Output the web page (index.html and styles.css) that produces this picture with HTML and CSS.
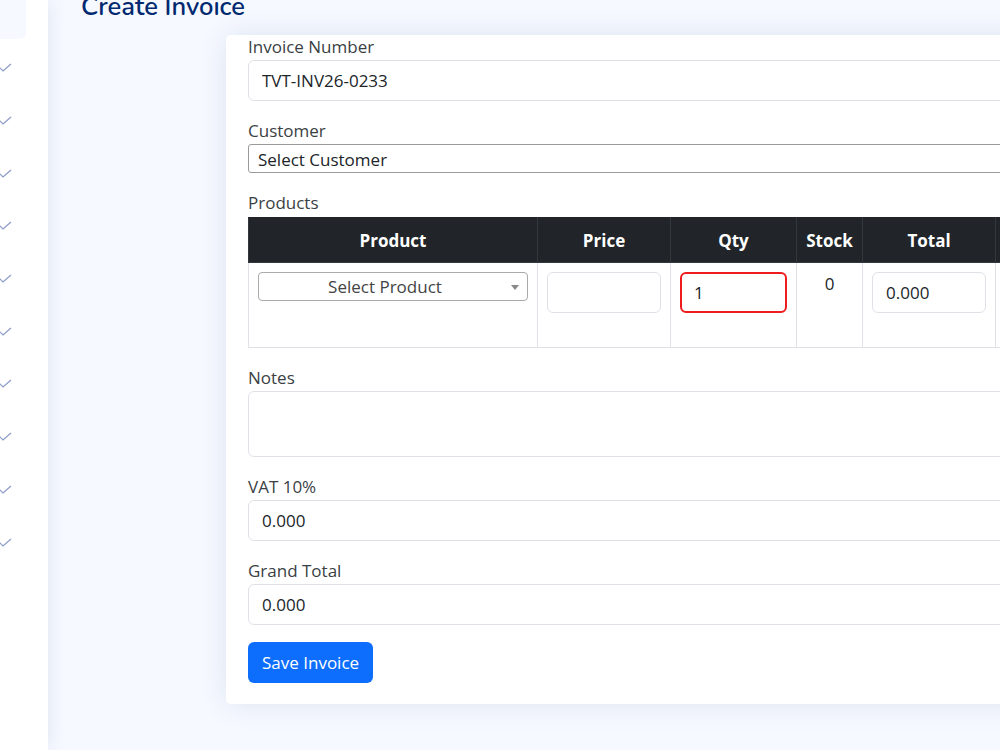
FILE: index.html
```
<!doctype html>
<html lang="en">
    <head>
        <meta charset="UTF-8" />
        <meta name="viewport" content="width=device-width, initial-scale=1.0" />
        <title>Create Invoice</title>
        <link rel="stylesheet" href="styles.css">
    </head>
    <body>
        <aside class="sidebar">
            <div class="sidebar-top"></div>
            <ul class="sidebar-nav">
                <li><svg viewBox="0 0 12 10" class="check"><polyline points="-2,3 3,8 11,1" /></svg></li>
                <li><svg viewBox="0 0 12 10" class="check"><polyline points="-2,3 3,8 11,1" /></svg></li>
                <li><svg viewBox="0 0 12 10" class="check"><polyline points="-2,3 3,8 11,1" /></svg></li>
                <li><svg viewBox="0 0 12 10" class="check"><polyline points="-2,3 3,8 11,1" /></svg></li>
                <li><svg viewBox="0 0 12 10" class="check"><polyline points="-2,3 3,8 11,1" /></svg></li>
                <li><svg viewBox="0 0 12 10" class="check"><polyline points="-2,3 3,8 11,1" /></svg></li>
                <li><svg viewBox="0 0 12 10" class="check"><polyline points="-2,3 3,8 11,1" /></svg></li>
                <li><svg viewBox="0 0 12 10" class="check"><polyline points="-2,3 3,8 11,1" /></svg></li>
                <li><svg viewBox="0 0 12 10" class="check"><polyline points="-2,3 3,8 11,1" /></svg></li>
                <li><svg viewBox="0 0 12 10" class="check"><polyline points="-2,3 3,8 11,1" /></svg></li>
            </ul>
        </aside>

        <main class="main">
            <h1 class="pagetitle">Create Invoice</h1>

            <div class="card">
                <form class="card-body">
                    <div class="field">
                        <label for="invoice_number">Invoice Number</label>
                        <input type="text" id="invoice_number" class="form-control" value="TVT-INV26-0233" />
                    </div>

                    <div class="field field-select">
                        <label for="customer">Customer</label>
                        <select id="customer" class="plain-select">
                            <option>Select Customer</option>
                        </select>
                    </div>

                    <div class="field field-table">
                        <label>Products</label>
                        <table class="products">
                            <colgroup>
                                <col class="col-product" />
                                <col class="col-price" />
                                <col class="col-qty" />
                                <col class="col-stock" />
                                <col class="col-total" />
                                <col class="col-action" />
                            </colgroup>
                            <thead>
                                <tr>
                                    <th>Product</th>
                                    <th>Price</th>
                                    <th>Qty</th>
                                    <th>Stock</th>
                                    <th>Total</th>
                                    <th></th>
                                </tr>
                            </thead>
                            <tbody>
                                <tr>
                                    <td>
                                        <div class="product-select">
                                            <span>Select Product</span>
                                            <b class="arrow"></b>
                                        </div>
                                    </td>
                                    <td><input type="text" class="form-control" /></td>
                                    <td><input type="text" class="form-control is-invalid" value="1" /></td>
                                    <td class="stock">0</td>
                                    <td><input type="text" class="form-control" value="0.000" /></td>
                                    <td></td>
                                </tr>
                            </tbody>
                        </table>
                    </div>

                    <div class="field">
                        <label for="notes">Notes</label>
                        <textarea id="notes" class="form-control notes"></textarea>
                    </div>

                    <div class="field">
                        <label for="vat">VAT 10%</label>
                        <input type="text" id="vat" class="form-control" value="0.000" />
                    </div>

                    <div class="field field-last">
                        <label for="grand_total">Grand Total</label>
                        <input type="text" id="grand_total" class="form-control" value="0.000" />
                    </div>

                    <button type="button" class="btn-primary">Save Invoice</button>
                </form>
            </div>
        </main>
    </body>
</html>
```

FILE: styles.css
```
html,
body {
    height: 100%;
    overflow: hidden;
}
body {
    font-family: "Open Sans", "Liberation Sans", sans-serif;
    background-color: #f6f9ff;
    color: #212529;
    display: flex;
    margin: 0;
}
.sidebar {
    width: 48px;
    flex-shrink: 0;
    background-color: #ffffff;
    box-shadow: 0 0 20px rgba(1, 41, 112, 0.1);
    position: relative;
    z-index: 2;
}
.sidebar-top {
    width: 26px;
    height: 39px;
    background-color: #f6f9ff;
    border-bottom-right-radius: 6px;
}
.sidebar-nav {
    list-style: none;
    margin: 0;
    padding: 3px 0 0 0;
}
.sidebar-nav li {
    height: 52.7px;
    display: flex;
    align-items: center;
}
.check {
    width: 12px;
    height: 10px;
    overflow: visible;
}
.check polyline {
    fill: none;
    stroke: #8b9bc8;
    stroke-width: 1.2;
}
.main {
    flex: 1;
    min-width: 0;
    padding-left: 33px;
    overflow: hidden;
}
.pagetitle {
    font-family: "Nunito", "Open Sans", sans-serif;
    font-size: 25.5px;
    font-weight: 600;
    line-height: 31px;
    color: #012970;
    margin: -9px 0 13px 0;
    white-space: nowrap;
}
.card {
    margin-left: 145px;
    width: 871px;
    background-color: #ffffff;
    border-radius: 5px;
    box-shadow: 0 0 30px rgba(1, 41, 112, 0.1);
}
.card-body {
    padding: 0 22px 21px 22px;
}
.field {
    margin-bottom: 18px;
}
.field-last {
    margin-bottom: 17px;
}
label {
    display: block;
    font-size: 17px;
    line-height: 24px;
    color: #3a3f44;
    margin-bottom: 1px;
}
.form-control {
    display: block;
    box-sizing: border-box;
    width: 100%;
    height: 41px;
    padding: 0 13px;
    font-family: inherit;
    font-size: 17px;
    color: #212529;
    background-color: #ffffff;
    border: 1px solid #dee2e6;
    border-radius: 6px;
    outline: none;
}
.form-control.is-invalid {
    border: 2px solid #ee1c1c;
    padding-left: 12px;
}
.notes {
    height: 66px;
    resize: none;
}
.plain-select {
    display: block;
    box-sizing: border-box;
    width: 100%;
    height: 29px;
    margin-top: 1px;
    padding: 1px 9px 0 9px;
    font-family: inherit;
    font-size: 17px;
    color: #212529;
    background-color: #ffffff;
    border: 1px solid #9a9a9a;
    border-radius: 3px;
    appearance: none;
}
.products {
    width: 827px;
    margin-top: 2px;
    border-collapse: collapse;
    table-layout: fixed;
}
.col-product { width: 289px; }
.col-price { width: 133px; }
.col-qty { width: 126px; }
.col-stock { width: 66px; }
.col-total { width: 133px; }
.col-action { width: 80px; }
.products th {
    height: 44px;
    padding: 0;
    background-color: #212529;
    color: #ffffff;
    font-weight: 700;
    font-size: 17px;
    text-align: center;
    border: 1px solid #32383e;
    border-top-color: #212529;
}
.products td {
    height: 85px;
    box-sizing: border-box;
    padding: 9px 9px;
    vertical-align: top;
    border: 1px solid #dee2e6;
}
.products td.stock {
    text-align: center;
    font-size: 17px;
    line-height: 24px;
    padding-top: 9px;
}
.product-select {
    position: relative;
    box-sizing: border-box;
    height: 29px;
    padding-right: 16px;
    border: 1px solid #aaaaaa;
    border-radius: 4px;
    text-align: center;
    font-size: 17px;
    line-height: 28px;
    color: #444444;
}
.arrow {
    position: absolute;
    right: 8px;
    top: 12px;
    border-top: 5px solid #888888;
    border-left: 4px solid transparent;
    border-right: 4px solid transparent;
}
.btn-primary {
    background-color: #0d6efd;
    color: #ffffff;
    height: 41px;
    padding: 0 14px;
    border: none;
    border-radius: 6px;
    font-family: inherit;
    font-size: 17px;
    cursor: pointer;
}
.btn-primary:hover {
    background-color: #0b5ed7;
}
```
